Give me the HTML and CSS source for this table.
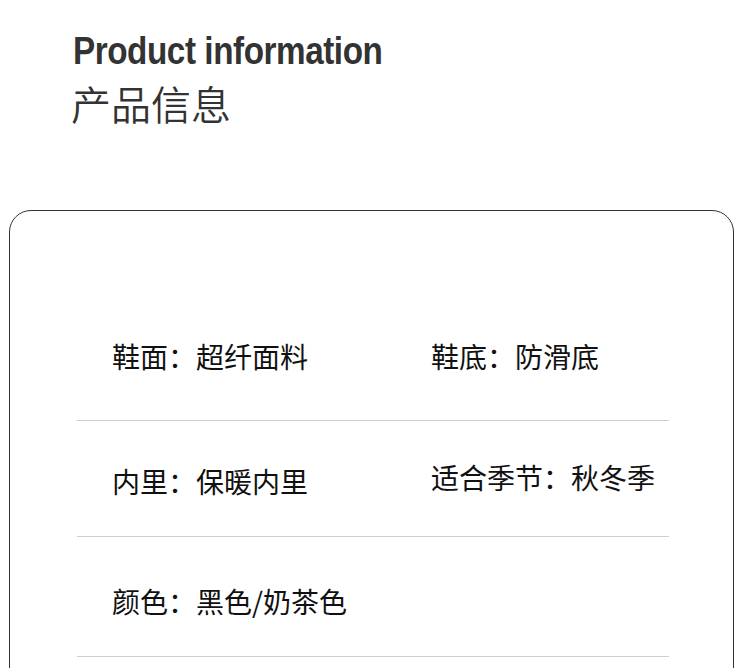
FILE: index.html
```html
<!DOCTYPE html>
<html lang="zh-CN">
<head>
<meta charset="utf-8">
<title>Product information</title>
<link rel="stylesheet" href="styles.css">
</head>
<body>
<header class="heading">
  <h1 class="heading-en">Product information</h1>
  <h2 class="heading-cn">产品信息</h2>
</header>
<section class="card">
  <div class="row row--first">
    <div class="cell">鞋面：超纤面料</div>
    <div class="cell">鞋底：防滑底</div>
  </div>
  <div class="row">
    <div class="cell">内里：保暖内里</div>
    <div class="cell cell--raised">适合季节：秋冬季</div>
  </div>
  <div class="row row--last">
    <div class="cell">颜色：黑色/奶茶色</div>
    <div class="cell"></div>
  </div>
</section>
</body>
</html>
```

FILE: styles.css
```css
html, body {
  margin: 0;
  padding: 0;
  background: #ffffff;
  overflow: hidden;
}
body {
  width: 750px;
  height: 668px;
  font-family: "Noto Sans CJK SC", "Noto Sans", sans-serif;
  color: #111;
}
.heading {
  padding: 28px 0 0 73px;
}
.heading-en {
  margin: 0;
  font-family: "Liberation Sans", Arial, sans-serif;
  font-weight: 700;
  font-size: 38px;
  line-height: 46px;
  letter-spacing: -0.5px;
  color: #333;
  transform: scaleX(0.875);
  transform-origin: left center;
  white-space: nowrap;
}
.heading-cn {
  margin: 5px 0 0 -2px;
  font-family: "Noto Sans CJK SC", sans-serif;
  font-weight: 350;
  font-size: 40px;
  line-height: 48px;
  color: #333;
}
.card {
  margin: 83px 0 0 9px;
  width: 725px;
  height: 520px;
  border: 1.5px solid #333;
  border-radius: 22px;
  box-sizing: border-box;
  padding: 125px 64px 0 67px;
}
.row {
  display: grid;
  grid-template-columns: 319px 1fr;
  padding: 40px 0 35px 35px;
  border-bottom: 1px solid #cfcfcf;
}
.row--first {
  padding-top: 0;
  padding-bottom: 44px;
}
.row--last {
  padding-top: 44px;
}
.cell {
  font-size: 28px;
  line-height: 40px;
  height: 40px;
  font-weight: 400;
  white-space: nowrap;
}
.cell--raised {
  margin-top: -4px;
}
```
